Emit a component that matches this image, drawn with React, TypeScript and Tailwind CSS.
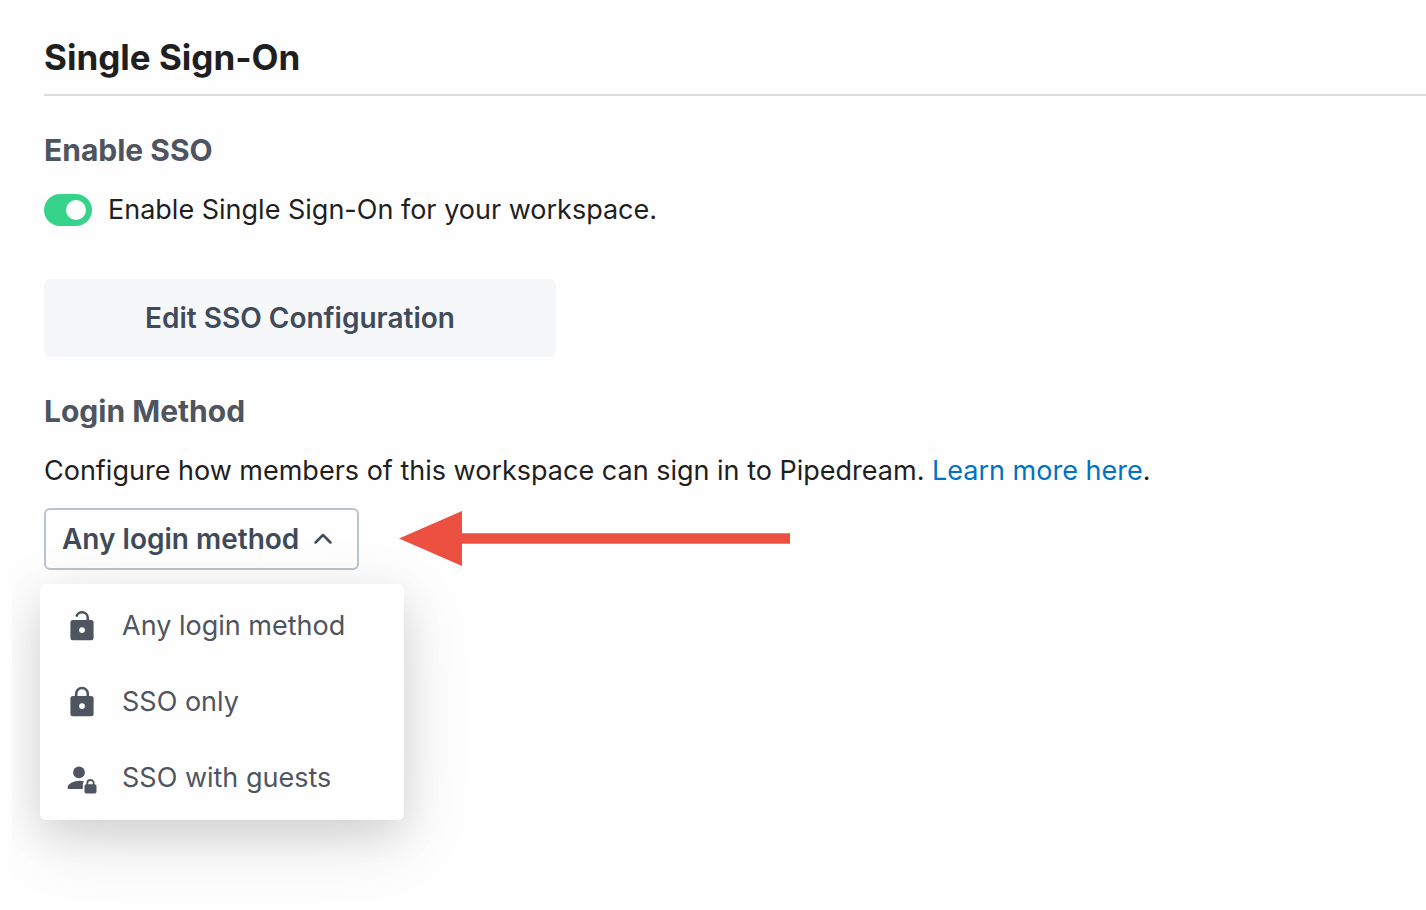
import React, { useState } from 'react';
import clsx from 'clsx';

function UnlockedIcon() {
  return (
    <svg viewBox="0 0 32 32" className="h-8 w-8 shrink-0" aria-hidden="true">
      <path d="M10.4 6.6a5.8 5.8 0 0 1 11.4 1.2V12" fill="none" stroke="currentColor" strokeWidth="2.6" />
      <path
        fill="currentColor"
        fillRule="evenodd"
        d="M6.9 10h18.2a2.5 2.5 0 0 1 2.5 2.5v15.2a2.5 2.5 0 0 1-2.5 2.5H6.9a2.5 2.5 0 0 1-2.5-2.5V12.5a2.5 2.5 0 0 1 2.5-2.5zM16 17.2a2.9 2.9 0 1 0 0 5.8 2.9 2.9 0 0 0 0-5.8z"
      />
    </svg>
  );
}

function LockedIcon() {
  return (
    <svg viewBox="0 0 32 32" className="h-8 w-8 shrink-0" aria-hidden="true">
      <path d="M10.2 11.5V7.8a5.8 5.8 0 0 1 11.6 0v3.7" fill="none" stroke="currentColor" strokeWidth="2.6" />
      <path
        fill="currentColor"
        fillRule="evenodd"
        d="M6.9 10h18.2a2.5 2.5 0 0 1 2.5 2.5v15.2a2.5 2.5 0 0 1-2.5 2.5H6.9a2.5 2.5 0 0 1-2.5-2.5V12.5a2.5 2.5 0 0 1 2.5-2.5zM16 17.2a2.9 2.9 0 1 0 0 5.8 2.9 2.9 0 0 0 0-5.8z"
      />
    </svg>
  );
}

function GuestLockIcon() {
  return (
    <svg viewBox="0 0 32 32" className="h-8 w-8 shrink-0" aria-hidden="true">
      <circle cx="13" cy="10.4" r="5.9" fill="currentColor" />
      <path d="M18 19.3c-1.2-.3-2.6-.5-4-.5-6.5 0-12.3 3.2-12.3 6.3v2h15.1v-3.5c0-1.7.4-3 1.2-4.3z" fill="currentColor" />
      <path d="M21.3 23v-1.8a3.2 3.2 0 0 1 6.4 0V23" fill="none" stroke="currentColor" strokeWidth="1.8" />
      <rect x="18.5" y="22.3" width="12" height="9.3" rx="1.8" fill="currentColor" />
    </svg>
  );
}

const loginMethods = [
  { id: 'any', label: 'Any login method', icon: UnlockedIcon },
  { id: 'sso', label: 'SSO only', icon: LockedIcon },
  { id: 'guests', label: 'SSO with guests', icon: GuestLockIcon },
];

export default function App() {
  const [enabled, setEnabled] = useState(true);
  const [open, setOpen] = useState(true);
  const [method, setMethod] = useState('any');

  const current = loginMethods.find(m => m.id === method);

  return (
    <main className="min-h-screen bg-[#fefefe] pt-[33px] pl-11 font-['Inter',sans-serif] text-[27px] leading-9 text-[#1f1f1f]">
      <h1 className="border-b-2 border-[#dcdcdc] pb-[13px] text-[35px] leading-12 font-bold">Single Sign-On</h1>

      {/* Enable SSO */}
      <section className="pt-[34px]">
        <h2 className="text-[30px] leading-10 font-bold text-[#4f5560]">Enable SSO</h2>
        <label className="mt-[22px] flex items-center gap-4">
          <input
            type="checkbox"
            role="switch"
            checked={enabled}
            onChange={e => setEnabled(e.target.checked)}
            className="h-8 w-12 shrink-0 appearance-none rounded-full bg-gray-300 p-1.5 before:block before:h-5 before:w-5 before:rounded-full before:bg-white checked:bg-[#36d38a] checked:before:ml-4"
          />
          Enable Single Sign-On for your workspace.
        </label>
        <button className="mt-[51px] block w-full max-w-[512px] rounded-md bg-[#f6f7f9] py-[21px] text-[28px] leading-9 font-semibold text-[#3f4a5a]">
          Edit SSO Configuration
        </button>
      </section>

      {/* Login method */}
      <section className="pt-[34px]">
        <h2 className="text-[30px] leading-10 font-bold text-[#4f5560]">Login Method</h2>
        <p className="mt-[22px]">
          Configure how members of this workspace can sign in to Pipedream.{' '}
          <a href="#learn-more" className="text-[#0072c6]">Learn more here</a>.
        </p>

        <div className="mt-[19px] flex items-center gap-10">
          <div className="relative">
            <button
              onClick={() => setOpen(!open)}
              aria-haspopup="menu"
              aria-expanded={open}
              className="flex items-center gap-3.5 rounded-md border-2 border-[#bcc2d0] py-[11px] pr-6 pl-4 text-[28px] leading-9 font-semibold text-[#3f4a5a]"
            >
              {current?.label}
              <svg viewBox="0 0 20 20" className={clsx('h-5 w-5', !open && 'rotate-180')} fill="none" aria-hidden="true">
                <path d="M2.5 13.5 10 6l7.5 7.5" stroke="currentColor" strokeWidth="2.5" strokeLinecap="round" strokeLinejoin="round" />
              </svg>
            </button>

            {open && (
              <div
                role="menu"
                className="absolute top-full -left-1 mt-3.5 w-[364px] rounded-md bg-[#fefefe] py-1 text-[#4f5560] shadow-[0_20px_72px_rgba(0,0,0,0.1),0_14px_40px_rgba(0,0,0,0.11)] [clip-path:inset(-80px_-80px_-110px_-28px)]"
              >
                {loginMethods.map(({ id, label, icon: Icon }) => (
                  <button
                    key={id}
                    role="menuitem"
                    onClick={() => {
                      setMethod(id);
                      setOpen(false);
                    }}
                    className="flex w-full items-center gap-6 py-5 pl-[26px] text-left"
                  >
                    <Icon />
                    {label}
                  </button>
                ))}
              </div>
            )}
          </div>

          <svg viewBox="0 0 391 56" className="h-14 w-[391px] shrink-0" aria-hidden="true">
            <path d="M0 27.5 63 0v22.3h328v10.4H63V55z" fill="#eb5040" />
          </svg>
        </div>
      </section>
    </main>
  );
}
